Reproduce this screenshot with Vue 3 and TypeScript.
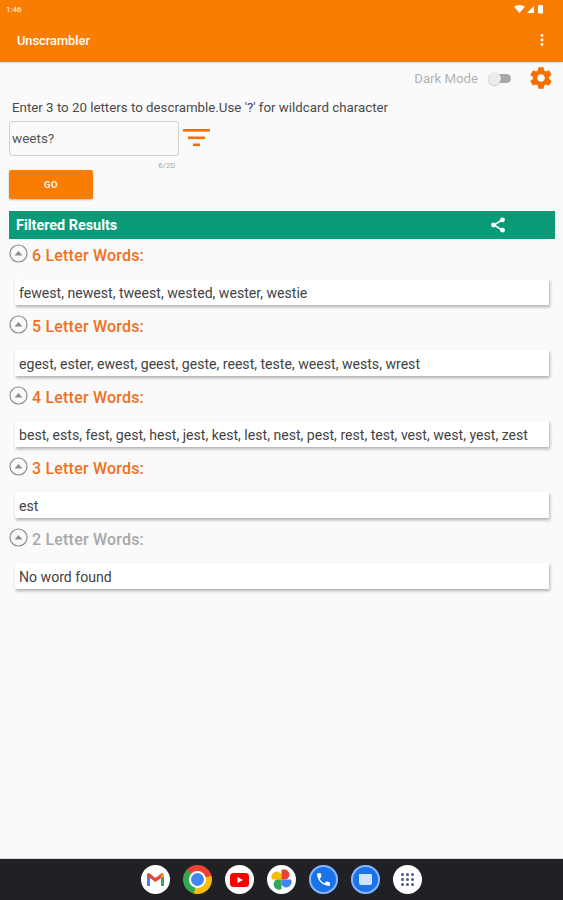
<template>
  <div class="screen">
    <header class="appbar">
      <div class="status">
        <span class="time">1:46</span>
        <svg class="status-icons" width="32" height="10" viewBox="0 0 32 10">
          <path d="M0 2.5 Q5.5 -0.5 11 2.5 L5.5 9 Z" fill="#fff" />
          <path d="M13 9 L20 2 V9 Z" fill="#fff" />
          <rect x="24" y="1" width="5" height="8.5" rx="1" fill="#fff" />
        </svg>
      </div>
      <div class="toolbar">
        <span class="title">Unscrambler</span>
        <svg width="4" height="14" viewBox="0 0 4 14">
          <circle cx="2" cy="2.5" r="1.4" fill="#fff" />
          <circle cx="2" cy="7" r="1.4" fill="#fff" />
          <circle cx="2" cy="11.5" r="1.4" fill="#fff" />
        </svg>
      </div>
    </header>

    <main class="content">
      <div class="mode-row">
        <span class="mode-label">Dark Mode</span>
        <span class="switch"><span class="knob"></span></span>
        <svg class="gear" width="26" height="26" viewBox="0 0 24 24">
          <path
            fill="#f56f00"
            d="M19.43 12.98c.04-.32.07-.64.07-.98s-.03-.66-.07-.98l2.11-1.65c.19-.15.24-.42.12-.64l-2-3.46c-.12-.22-.39-.3-.61-.22l-2.49 1c-.52-.4-1.08-.73-1.69-.98l-.38-2.65A.49.49 0 0 0 14 2h-4c-.25 0-.46.18-.49.42l-.38 2.65c-.61.25-1.17.59-1.69.98l-2.49-1c-.23-.09-.49 0-.61.22l-2 3.46c-.13.22-.07.49.12.64l2.11 1.65c-.04.32-.07.65-.07.98s.03.66.07.98l-2.11 1.65c-.19.15-.24.42-.12.64l2 3.46c.12.22.39.3.61.22l2.49-1c.52.4 1.08.73 1.69.98l.38 2.65c.03.24.24.42.49.42h4c.25 0 .46-.18.49-.42l.38-2.65c.61-.25 1.17-.59 1.69-.98l2.49 1c.23.09.49 0 .61-.22l2-3.46c.12-.22.07-.49-.12-.64l-2.11-1.65zM12 15.5c-1.93 0-3.5-1.57-3.5-3.5s1.57-3.5 3.5-3.5 3.5 1.57 3.5 3.5-1.57 3.5-3.5 3.5z"
          />
        </svg>
      </div>

      <p class="hint">Enter 3 to 20 letters to descramble.Use '?' for wildcard character</p>

      <div class="input-row">
        <div class="input-wrap">
          <div class="input">weets?</div>
          <div class="counter">6/20</div>
        </div>
        <svg class="filter" width="27" height="20" viewBox="0 0 27 20">
          <rect x="0" y="0" width="27" height="2.6" fill="#f56f00" />
          <rect x="5" y="7.500" width="17" height="2.6" fill="#f56f00" />
          <rect x="10" y="14.500" width="7" height="2.6" fill="#f56f00" />
        </svg>
      </div>

      <button class="go" type="button">GO</button>

      <div class="results-bar">
        <span>Filtered Results</span>
        <svg class="share" width="16" height="16" viewBox="0 0 16 16">
          <path d="M12 3 L4 8 L12 13" fill="none" stroke="#fff" stroke-width="1.500" />
          <circle cx="12.500" cy="2.800" r="2.400" fill="#fff" />
          <circle cx="3.500" cy="8" r="2.400" fill="#fff" />
          <circle cx="12.500" cy="13.200" r="2.400" fill="#fff" />
        </svg>
      </div>

      <section v-for="group in groups" :key="group.length" class="group">
        <div class="group-head" :class="{ empty: !group.found }">
          <svg width="19" height="19" viewBox="0 0 19 19">
            <circle cx="9.500" cy="9.500" r="8.500" fill="none" stroke="#8c8c8c" stroke-width="1.200" />
            <path d="M5.500 11.500 L9.500 7 L13.500 11.500 Z" fill="#8c8c8c" />
          </svg>
          <span>{{ group.length }} Letter Words:</span>
        </div>
        <div class="words">{{ group.words }}</div>
      </section>
    </main>

    <footer class="dock">
      <span class="dock-icon white">
        <svg width="19" height="15" viewBox="0 0 19 15">
          <path d="M1 14 V2 L4 3.500 V14 Z" fill="#4285f4" />
          <path d="M15 14 V3.500 L18 2 V14 Z" fill="#34a853" />
          <path d="M1 2 L3 1 L9.500 6 L16 1 L18 2 V4 L9.500 10 L1 4 Z" fill="#ea4335" />
          <path d="M15 3.500 L18 1.500 V4 L15 6.300 Z" fill="#fbbc04" />
        </svg>
      </span>
      <span class="dock-icon chrome">
        <span class="chrome-dot"></span>
      </span>
      <span class="dock-icon white">
        <svg width="19" height="14" viewBox="0 0 19 14">
          <rect width="19" height="14" rx="3.500" fill="#f00" />
          <path d="M7.500 4 L13 7 L7.500 10 Z" fill="#fff" />
        </svg>
      </span>
      <span class="dock-icon white">
        <svg width="21" height="21" viewBox="0 0 21 21">
          <path d="M10.500 10.500 H1 A5 5 0 0 1 10.500 5.500 Z" fill="#fbbc04" />
          <path d="M10.500 10.500 V1 A5 5 0 0 1 15.500 10.500 Z" fill="#ea4335" />
          <path d="M10.500 10.500 H20 A5 5 0 0 1 10.500 15.500 Z" fill="#4285f4" />
          <path d="M10.500 10.500 V20 A5 5 0 0 1 5.500 10.500 Z" fill="#34a853" />
        </svg>
      </span>
      <span class="dock-icon blue">
        <svg width="17" height="17" viewBox="0 0 24 24">
          <path
            fill="#fff"
            d="M6.620 10.790c1.440 2.830 3.760 5.140 6.590 6.590l2.200-2.200c.27-.27.67-.36 1.020-.24 1.120.37 2.330.57 3.570.57.550 0 1 .45 1 1V20c0 .55-.45 1-1 1C10.610 21 3 13.390 3 4c0-.55.45-1 1-1h3.500c.55 0 1 .45 1 1 0 1.250.2 2.450.57 3.570.11.350.03.740-.25 1.020l-2.200 2.200z"
          />
        </svg>
      </span>
      <span class="dock-icon blue">
        <svg width="15" height="14" viewBox="0 0 15 14">
          <path d="M3 1 H13 A1 1 0 0 1 14 2 V10 A2 2 0 0 1 12 12 H3 A2 2 0 0 1 1 10 V1 Z" fill="#d2e3fc" />
        </svg>
      </span>
      <span class="dock-icon white apps">
        <i v-for="n in 9" :key="n"></i>
      </span>
    </footer>
  </div>
</template>

<script setup lang="ts">
interface WordGroup {
  length: number
  words: string
  found: boolean
}

const groups: WordGroup[] = [
  { length: 6, words: 'fewest, newest, tweest, wested, wester, westie', found: true },
  { length: 5, words: 'egest, ester, ewest, geest, geste, reest, teste, weest, wests, wrest', found: true },
  { length: 4, words: 'best, ests, fest, gest, hest, jest, kest, lest, nest, pest, rest, test, vest, west, yest, zest', found: true },
  { length: 3, words: 'est', found: true },
  { length: 2, words: 'No word found', found: false },
]
</script>

<style>
html,
body {
  margin: 0;
  background: #fafafa;
}
</style>

<style scoped>
.screen {
  width: 563px;
  height: 900px;
  display: flex;
  flex-direction: column;
  overflow: hidden;
  background: #fafafa;
  font-family: Roboto, "Liberation Sans", sans-serif;
  color: #444;
}

.appbar {
  height: 62px;
  flex: none;
  background: #f97d03;
  color: #fff;
  box-shadow: 0 1px 2px rgba(0, 0, 0, 0.15);
}

.status {
  height: 18px;
  display: flex;
  align-items: center;
  justify-content: space-between;
  padding: 0 17px 0 6px;
}

.time {
  font-size: 8px;
}

.toolbar {
  height: 44px;
  display: flex;
  align-items: center;
  justify-content: space-between;
  padding: 0 19px 0 17px;
}

.title {
  font-size: 12.8px;
  font-weight: 500;
}

.content {
  flex: 1;
  padding: 0 8px 0 9px;
}

.mode-row {
  height: 32px;
  display: flex;
  align-items: center;
  justify-content: flex-end;
  padding-right: 1px;
}

.mode-label {
  font-size: 13.2px;
  color: #b3b3b3;
  margin-right: 10px;
}

.switch {
  position: relative;
  width: 23px;
  height: 9px;
  border-radius: 5px;
  background: #a8a8a8;
  margin-right: 17px;
}

.knob {
  position: absolute;
  left: 0;
  top: -2px;
  width: 13px;
  height: 13px;
  border-radius: 50%;
  background: #ececec;
  box-shadow: 0 1px 1px rgba(0, 0, 0, 0.2);
}

.hint {
  margin: 6px 0 0 3px;
  font-size: 13.3px;
  line-height: 16px;
  color: #4a4a4a;
}

.input-row {
  display: flex;
  align-items: flex-start;
  margin-top: 5px;
}

.input-wrap {
  width: 170px;
}

.input {
  height: 33px;
  padding: 0 2px;
  width: 164px;
  line-height: 33px;
  border: 1px solid #d0d0d0;
  border-radius: 3px;
  font-size: 13.500px;
  color: #555;
}

.counter {
  height: 14px;
  line-height: 20px;
  font-size: 8px;
  color: #a5a5a5;
  text-align: right;
  padding-right: 4px;
}

.filter {
  margin: 8px 0 0 4px;
}

.go {
  display: block;
  width: 84px;
  height: 29px;
  padding: 0;
  border: 0;
  border-radius: 2px;
  background: #f97d03;
  box-shadow: 0 1px 2px rgba(0, 0, 0, 0.25);
  color: #f5f5f5;
  font-family: inherit;
  font-size: 9.500px;
  font-weight: 700;
  letter-spacing: 0.5px;
}

.results-bar {
  height: 28px;
  margin-top: 12px;
  display: flex;
  align-items: center;
  justify-content: space-between;
  padding: 0 49px 0 7px;
  background: #0b9a78;
  color: #fff;
  font-size: 14.400px;
  font-weight: 700;
}

.group {
  height: 71px;
}

.group-head {
  height: 36px;
  display: flex;
  align-items: center;
  gap: 4px;
  font-size: 16px;
  font-weight: 500;
  color: #f26f1d;
  padding-bottom: 3px;
  box-sizing: border-box;
  letter-spacing: 0.2px;
}

.group-head svg {
  margin-bottom: 4px;
}

.group-head.empty {
  color: #a8a8a8;
}

.words {
  height: 26px;
  margin: 4px 6px 0;
  padding-left: 4px;
  line-height: 28px;
  background: #fff;
  box-shadow: 1px 2px 3px rgba(0, 0, 0, 0.3);
  font-size: 14.100px;
  color: #444;
  white-space: nowrap;
}

.dock {
  height: 42px;
  flex: none;
  display: flex;
  align-items: center;
  justify-content: center;
  gap: 13px;
  background: #202124;
  border-top: 1px solid #d8d8d8;
  box-sizing: border-box;
}

.dock-icon {
  width: 29px;
  height: 29px;
  border-radius: 50%;
  display: flex;
  align-items: center;
  justify-content: center;
}

.white {
  background: #fff;
}

.blue {
  background: #1a73e8;
  box-shadow: inset 0 0 0 2px #8ab4f8;
}

.chrome {
  background: conic-gradient(#ea4335 0 75deg, #fbbc04 75deg 195deg, #34a853 195deg 315deg, #ea4335 315deg);
}

.chrome-dot {
  width: 13px;
  height: 13px;
  border-radius: 50%;
  background: #4285f4;
  border: 2px solid #fff;
}

.apps {
  display: grid;
  grid-template-columns: repeat(3, 3px);
  grid-auto-rows: 3px;
  gap: 2px;
  place-content: center;
}

.apps i {
  display: block;
  width: 3px;
  height: 3px;
  border-radius: 50%;
  background: #4a5a8c;
}
</style>
